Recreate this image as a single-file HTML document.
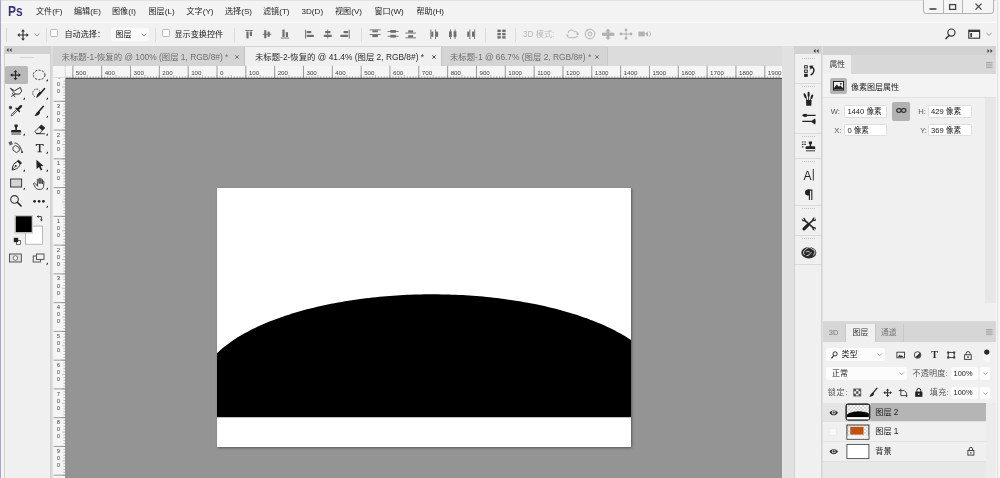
<!DOCTYPE html><html><head><meta charset="utf-8"><title>Photoshop</title><style>
*{margin:0;padding:0;box-sizing:border-box}
html,body{width:1000px;height:478px;overflow:hidden;background:#f0f0f0}
body{position:relative;filter:blur(0.4px);font-family:"Liberation Sans","Noto Sans CJK SC",sans-serif;font-size:8px;color:#222;line-height:1}
.a{position:absolute}
.t{position:absolute;white-space:nowrap;line-height:10px;height:10px}
svg{position:absolute;overflow:visible}
.menu span{position:absolute;top:6.5px;font-size:8.1px;line-height:10px;white-space:nowrap;color:#1e1e1e}
.rl{position:absolute;font-size:6.2px;line-height:7px;color:#444;white-space:nowrap}
.vd{position:absolute;font-size:6px;line-height:7.1px;color:#4a4a4a;width:8px;text-align:center}
.inp{position:absolute;background:#fff;border:0.7px solid #dedede;border-radius:1.5px;font-size:7.6px;line-height:11px;padding-left:2.4px;white-space:nowrap;color:#1c1c1c}
.lab{position:absolute;font-size:7.6px;line-height:10px;color:#555;white-space:nowrap}
</style></head><body>
<div class="a" style="left:0.00px;top:0.00px;width:1000.00px;height:22.30px;background:#f3f3f3;"></div>
<div class="a" style="left:0.00px;top:0.00px;width:1000.00px;height:0.80px;background:#e2e2e2;"></div>
<div class="a" style="left:0.00px;top:22.00px;width:1000.00px;height:1.20px;background:#fbfbfb;"></div>
<div class="a" style="left:0.00px;top:23.20px;width:1000.00px;height:23.00px;background:#f1f1f1;"></div>
<div class="a" style="left:7.6px;top:3.6px;font-size:13.8px;line-height:15px;font-weight:bold;color:#3a3478;transform:scaleX(0.87);transform-origin:0 0">Ps</div>
<div class="menu">
<span style="left:36px">文件(F)</span>
<span style="left:74px">编辑(E)</span>
<span style="left:112px">图像(I)</span>
<span style="left:148.5px">图层(L)</span>
<span style="left:186.5px">文字(Y)</span>
<span style="left:225px">选择(S)</span>
<span style="left:263px">滤镜(T)</span>
<span style="left:301.5px">3D(D)</span>
<span style="left:335px">视图(V)</span>
<span style="left:374.5px">窗口(W)</span>
<span style="left:416.5px">帮助(H)</span>
</div>
<div class="a" style="left:923px;top:-3px;width:70.5px;height:16.6px;border:0.8px solid #b2b2b2;border-radius:3px;background:#f5f5f5"></div>
<div class="a" style="left:943.30px;top:0.00px;width:0.80px;height:12.50px;background:#b5b5b5;"></div>
<div class="a" style="left:961.70px;top:0.00px;width:0.80px;height:12.50px;background:#b5b5b5;"></div>
<svg style="left:923px;top:0" width="71" height="13" viewBox="0 0 71 13"><path d="M6.5 9h7" stroke="#444" stroke-width="1.6" fill="none"/><rect x="26.6" y="4.6" width="6" height="4.8" fill="none" stroke="#444" stroke-width="1.3"/><path d="M52.5 3.6l6 6M58.5 3.6l-6 6" stroke="#444" stroke-width="1.3" fill="none"/></svg>
<div class="a" style="left:5.60px;top:28.00px;width:0.80px;height:14.00px;background:#d4d4d4;"></div>
<svg style="left:17.2px;top:28.6px" width="12" height="12" viewBox="0 0 12 12"><path d="M6 0.3l2 2.3H6.6v2.8h2.8V4l2.3 2-2.3 2V6.6H6.6v2.8H8l-2 2.3-2-2.3h1.4V6.6H2.6V8L0.3 6l2.3-2v1.4h2.8V2.6H4z" fill="#333"/></svg>
<svg style="left:33.5px;top:33px" width="6" height="4" viewBox="0 0 6 4"><path d="M0.5 0.5l2.5 2.5 2.5-2.5" stroke="#8a8a8a" stroke-width="0.9" fill="none"/></svg>
<div class="a" style="left:45.50px;top:28.00px;width:0.80px;height:14.00px;background:#dcdcdc;"></div>
<div class="a" style="left:50.3px;top:29.3px;width:8.2px;height:8.2px;border:0.8px solid #b8b8b8;border-radius:1.5px;background:#fbfbfb"></div>
<div class="t" style="left:64.50px;top:30.40px;font-size:8.1px;color:#222;">自动选择：</div>
<div class="a" style="left:110.5px;top:27.5px;width:38px;height:13.5px;background:#fbfbfb;border-radius:2px"></div>
<div class="t" style="left:115.50px;top:30.40px;font-size:8.1px;color:#222;">图层</div>
<svg style="left:141px;top:33px" width="6" height="4" viewBox="0 0 6 4"><path d="M0.5 0.5l2.5 2.5 2.5-2.5" stroke="#9a9a9a" stroke-width="0.9" fill="none"/></svg>
<div class="a" style="left:154.50px;top:28.00px;width:0.80px;height:14.00px;background:#dcdcdc;"></div>
<div class="a" style="left:161.5px;top:29.3px;width:8.2px;height:8.2px;border:0.8px solid #b8b8b8;border-radius:1.5px;background:#fbfbfb"></div>
<div class="t" style="left:174.50px;top:30.40px;font-size:8.1px;color:#222;">显示变换控件</div>
<div class="a" style="left:233.50px;top:28.00px;width:0.80px;height:14.00px;background:#dcdcdc;"></div>
<div class="a" style="left:361.00px;top:28.00px;width:0.80px;height:14.00px;background:#dcdcdc;"></div>
<div class="a" style="left:485.00px;top:28.00px;width:0.80px;height:14.00px;background:#dcdcdc;"></div>
<div class="a" style="left:515.00px;top:28.00px;width:0.80px;height:14.00px;background:#dcdcdc;"></div>
<div class="t" style="left:523.00px;top:30.40px;font-size:8.2px;color:#bababa;">3D 模式:</div>
<svg style="left:240px;top:24px" width="420" height="22" viewBox="240 24 420 22">
<g fill="#6f6f6f" stroke="none">
<!-- align top -->
<rect x="245.200" y="30" width="7.600" height="0.900"/><rect x="246.400" y="31.600" width="2.200" height="6.800"/><rect x="249.800" y="31.600" width="2.200" height="4.400"/>
<!-- align vcenter -->
<rect x="262.600" y="33.800" width="8.800" height="0.900"/><rect x="264.200" y="30.200" width="2.200" height="8"/><rect x="267.600" y="31.600" width="2.200" height="5.200"/>
<!-- align bottom -->
<rect x="280.800" y="37.600" width="8.400" height="0.900"/><rect x="282.400" y="29.600" width="2.200" height="7.400"/><rect x="285.800" y="32.200" width="2.200" height="4.800"/>
<!-- align left -->
<rect x="305" y="29.600" width="0.900" height="9"/><rect x="306.600" y="31" width="4.600" height="2.200"/><rect x="306.600" y="34.800" width="7.200" height="2.200"/>
<!-- align hcenter -->
<rect x="327.300" y="29.600" width="0.900" height="9"/><rect x="325.200" y="31" width="5.200" height="2.200"/><rect x="323.800" y="34.800" width="8" height="2.200"/>
<!-- align right -->
<rect x="348.800" y="29.600" width="0.900" height="9"/><rect x="343.600" y="31" width="4.600" height="2.200"/><rect x="340.400" y="34.800" width="7.800" height="2.200"/>
<!-- dist top -->
<rect x="369.600" y="29.400" width="11" height="0.900"/><rect x="372.400" y="30.300" width="5.400" height="2"/><rect x="369.600" y="34" width="11" height="0.900"/><rect x="372.400" y="34.900" width="5.400" height="2.200"/>
<!-- dist vcenter -->
<rect x="387.600" y="31" width="11" height="0.900"/><rect x="390.400" y="30" width="5.400" height="2.800"/><rect x="387.600" y="35.800" width="11" height="0.900"/><rect x="390.400" y="34.800" width="5.400" height="2.800"/>
<!-- dist bottom -->
<rect x="405.400" y="32.600" width="10.600" height="0.900"/><rect x="408.200" y="30.400" width="5" height="2.200"/><rect x="405.400" y="37.400" width="10.600" height="0.900"/><rect x="408.200" y="35.200" width="5" height="2.200"/>
<!-- dist left -->
<rect x="430.400" y="29.400" width="0.900" height="9.600"/><rect x="431.300" y="31.600" width="2" height="5.200"/><rect x="435" y="29.400" width="0.900" height="9.600"/><rect x="435.900" y="31.600" width="2.200" height="5.200"/>
<!-- dist hcenter -->
<rect x="450" y="29.400" width="0.900" height="9.600"/><rect x="449" y="31.400" width="2.800" height="5.600"/><rect x="454.600" y="29.400" width="0.900" height="9.600"/><rect x="453.600" y="31.400" width="2.800" height="5.600"/>
<!-- dist right -->
<rect x="469.400" y="29.400" width="0.900" height="9.600"/><rect x="467.200" y="31.600" width="2.200" height="5.200"/><rect x="474.200" y="29.400" width="0.900" height="9.600"/><rect x="472" y="31.600" width="2.200" height="5.200"/>
<!-- auto align grid -->
<rect x="497.400" y="29.600" width="3.400" height="2.400"/><rect x="502.200" y="29.600" width="3.400" height="2.400"/><rect x="497.400" y="32.900" width="3.400" height="2.400"/><rect x="502.200" y="32.900" width="3.400" height="2.400"/><rect x="497.400" y="36.200" width="3.400" height="2.400"/><rect x="502.200" y="36.200" width="3.400" height="2.400"/>
</g>
<g fill="none" stroke="#b2b2b2" stroke-width="1">
<!-- orbit -->
<path d="M568 33.200a3.400 3.400 0 0 1 6.400-1.400 2.800 2.800 0 0 1 3.800 2.800"/>
<path d="M577.800 36.200a6 2.600 0 0 1-10.600 .4"/>
<path d="M566 34.600l1.200 2.200 1.600-1.800zM578.800 33.400l-1.400 2-1.400-1.800z" fill="#b2b2b2" stroke="none"/>
<!-- roll -->
<circle cx="590" cy="34" r="4.800"/><circle cx="590" cy="34" r="2"/>
<path d="M585.600 30l2.200-.8-.2 2.200z" fill="#b2b2b2" stroke="none"/>
</g>
<g fill="#b2b2b2">
<!-- pan -->
<path d="M608 28.600l2.800 2.800h-1.600v1.400h3.600v1.600l0 0h0v-1.600h0l0 0v1.600h0 0v1.400h-3.600v1.400h1.600l-2.800 2.800-2.800-2.800h1.600v-1.400h-3.600v-3h3.600v-1.400h-1.600z"/>
<path d="M602 32.800h12.400v3h-12.400z"/>
<!-- slide -->
<circle cx="626" cy="29.800" r="1.400"/><circle cx="626" cy="38.400" r="1.400"/><circle cx="621" cy="34" r="1.400"/><circle cx="631" cy="34" r="1.400"/><circle cx="626" cy="34" r="1"/>
<path d="M621 33.600h10v.9h-10zM625.600 30h.9v8h-.9z"/>
<!-- camera -->
<rect x="638.400" y="31.600" width="6.400" height="4.800"/><path d="M645.600 33.200l2.400-1.600v4.800l-2.400-1.600z"/>
<path d="M649.400 31.400l1.400 2.600-1.400 2.600" fill="none" stroke="#b2b2b2" stroke-width="0.800"/>
</g>
<!-- search -->
</svg>
<svg style="left:940px;top:26px" width="56" height="18" viewBox="940 26 56 18">
<circle cx="951.400" cy="32.600" r="3.600" fill="none" stroke="#333" stroke-width="1.200"/>
<path d="M949 35.400l-3 3.200" stroke="#333" stroke-width="1.500" stroke-linecap="round"/>
<rect x="968.800" y="30.200" width="10.800" height="8" fill="#f4f4f4" stroke="#333" stroke-width="1.100"/>
<rect x="968.800" y="30.200" width="10.800" height="1.800" fill="#333"/>
<rect x="970.400" y="33" width="1.600" height="4" fill="#333"/>
<path d="M986.400 33l2.600 2.400 2.600-2.400" fill="none" stroke="#8a8a8a" stroke-width="0.900"/>
</svg>

<div class="a" style="left:0.00px;top:46.20px;width:1000.00px;height:432.00px;background:#dadada;"></div>
<div class="a" style="left:53.30px;top:46.20px;width:729.10px;height:19.50px;background:#d4d4d4;"></div>
<div class="a" style="left:607.00px;top:46.20px;width:175.40px;height:19.50px;background:#dcdcdc;"></div>
<div class="a" style="left:606.60px;top:47.00px;width:0.80px;height:18.50px;background:#c8c8c8;"></div>
<div class="a" style="left:245.00px;top:46.60px;width:196.00px;height:19.40px;background:#f0f0f0;"></div>
<div class="a" style="left:244.40px;top:47.00px;width:0.80px;height:18.50px;background:#c4c4c4;"></div>
<div class="a" style="left:441.00px;top:47.00px;width:0.80px;height:18.50px;background:#c4c4c4;"></div>
<div class="t" style="left:61.60px;top:51.60px;font-size:8.4px;color:#6e6e6e;">未标题-1-恢复的 @ 100% (图层 1, RGB/8#) *</div>
<div class="t" style="left:255.00px;top:51.60px;font-size:8.4px;color:#2a2a2a;">未标题-2-恢复的 @ 41.4% (图层 2, RGB/8#) *</div>
<div class="t" style="left:450.00px;top:51.60px;font-size:8.4px;color:#6e6e6e;">未标题-1 @ 66.7% (图层 2, RGB/8#) *</div>
<svg style="left:234.8px;top:54.6px" width="4" height="4" viewBox="0 0 4 4"><path d="M0.3 0.3l3.4 3.4M3.7 0.3l-3.4 3.4" stroke="#666" stroke-width="0.9"/></svg>
<svg style="left:431.6px;top:54.6px" width="4" height="4" viewBox="0 0 4 4"><path d="M0.3 0.3l3.4 3.4M3.7 0.3l-3.4 3.4" stroke="#333" stroke-width="0.9"/></svg>
<svg style="left:595px;top:54.6px" width="4" height="4" viewBox="0 0 4 4"><path d="M0.3 0.3l3.4 3.4M3.7 0.3l-3.4 3.4" stroke="#666" stroke-width="0.9"/></svg>
<div class="a" style="left:53.30px;top:65.60px;width:729.10px;height:12.80px;background:#f5f5f5;"></div>
<div class="a" style="left:53.30px;top:78.00px;width:12.30px;height:400.00px;background:#f5f5f5;"></div>
<div class="a" style="left:53.30px;top:65.60px;width:12.30px;height:12.40px;background:#f5f5f5;"></div>
<div class="a" style="left:65.60px;top:78.40px;width:716.80px;height:400.00px;background:#949494;"></div>
<svg style="left:0;top:0" width="1000" height="478" viewBox="0 0 1000 478"><path d="M67.08 76.20V78.4M69.97 76.20V78.4M72.85 75.00V78.4M75.73 76.20V78.4M78.62 76.20V78.4M81.50 76.20V78.4M84.38 76.20V78.4M87.26 75.00V78.4M90.15 76.20V78.4M93.03 76.20V78.4M95.91 76.20V78.4M98.80 76.20V78.4M101.68 75.00V78.4M104.56 76.20V78.4M107.45 76.20V78.4M110.33 76.20V78.4M113.21 76.20V78.4M116.09 75.00V78.4M118.98 76.20V78.4M121.86 76.20V78.4M124.74 76.20V78.4M127.63 76.20V78.4M130.51 75.00V78.4M133.39 76.20V78.4M136.28 76.20V78.4M139.16 76.20V78.4M142.04 76.20V78.4M144.93 75.00V78.4M147.81 76.20V78.4M150.69 76.20V78.4M153.57 76.20V78.4M156.46 76.20V78.4M159.34 75.00V78.4M162.22 76.20V78.4M165.11 76.20V78.4M167.99 76.20V78.4M170.87 76.20V78.4M173.75 75.00V78.4M176.64 76.20V78.4M179.52 76.20V78.4M182.40 76.20V78.4M185.29 76.20V78.4M188.17 75.00V78.4M191.05 76.20V78.4M193.94 76.20V78.4M196.82 76.20V78.4M199.70 76.20V78.4M202.59 75.00V78.4M205.47 76.20V78.4M208.35 76.20V78.4M211.23 76.20V78.4M214.12 76.20V78.4M217.00 75.00V78.4M219.88 76.20V78.4M222.77 76.20V78.4M225.65 76.20V78.4M228.53 76.20V78.4M231.41 75.00V78.4M234.30 76.20V78.4M237.18 76.20V78.4M240.06 76.20V78.4M242.95 76.20V78.4M245.83 75.00V78.4M248.71 76.20V78.4M251.60 76.20V78.4M254.48 76.20V78.4M257.36 76.20V78.4M260.25 75.00V78.4M263.13 76.20V78.4M266.01 76.20V78.4M268.89 76.20V78.4M271.78 76.20V78.4M274.66 75.00V78.4M277.54 76.20V78.4M280.43 76.20V78.4M283.31 76.20V78.4M286.19 76.20V78.4M289.07 75.00V78.4M291.96 76.20V78.4M294.84 76.20V78.4M297.72 76.20V78.4M300.61 76.20V78.4M303.49 75.00V78.4M306.37 76.20V78.4M309.26 76.20V78.4M312.14 76.20V78.4M315.02 76.20V78.4M317.90 75.00V78.4M320.79 76.20V78.4M323.67 76.20V78.4M326.55 76.20V78.4M329.44 76.20V78.4M332.32 75.00V78.4M335.20 76.20V78.4M338.09 76.20V78.4M340.97 76.20V78.4M343.85 76.20V78.4M346.74 75.00V78.4M349.62 76.20V78.4M352.50 76.20V78.4M355.38 76.20V78.4M358.27 76.20V78.4M361.15 75.00V78.4M364.03 76.20V78.4M366.92 76.20V78.4M369.80 76.20V78.4M372.68 76.20V78.4M375.56 75.00V78.4M378.45 76.20V78.4M381.33 76.20V78.4M384.21 76.20V78.4M387.10 76.20V78.4M389.98 75.00V78.4M392.86 76.20V78.4M395.75 76.20V78.4M398.63 76.20V78.4M401.51 76.20V78.4M404.39 75.00V78.4M407.28 76.20V78.4M410.16 76.20V78.4M413.04 76.20V78.4M415.93 76.20V78.4M418.81 75.00V78.4M421.69 76.20V78.4M424.58 76.20V78.4M427.46 76.20V78.4M430.34 76.20V78.4M433.23 75.00V78.4M436.11 76.20V78.4M438.99 76.20V78.4M441.87 76.20V78.4M444.76 76.20V78.4M447.64 75.00V78.4M450.52 76.20V78.4M453.41 76.20V78.4M456.29 76.20V78.4M459.17 76.20V78.4M462.06 75.00V78.4M464.94 76.20V78.4M467.82 76.20V78.4M470.70 76.20V78.4M473.59 76.20V78.4M476.47 75.00V78.4M479.35 76.20V78.4M482.24 76.20V78.4M485.12 76.20V78.4M488.00 76.20V78.4M490.88 75.00V78.4M493.77 76.20V78.4M496.65 76.20V78.4M499.53 76.20V78.4M502.42 76.20V78.4M505.30 75.00V78.4M508.18 76.20V78.4M511.07 76.20V78.4M513.95 76.20V78.4M516.83 76.20V78.4M519.71 75.00V78.4M522.60 76.20V78.4M525.48 76.20V78.4M528.36 76.20V78.4M531.25 76.20V78.4M534.13 75.00V78.4M537.01 76.20V78.4M539.90 76.20V78.4M542.78 76.20V78.4M545.66 76.20V78.4M548.55 75.00V78.4M551.43 76.20V78.4M554.31 76.20V78.4M557.19 76.20V78.4M560.08 76.20V78.4M562.96 75.00V78.4M565.84 76.20V78.4M568.73 76.20V78.4M571.61 76.20V78.4M574.49 76.20V78.4M577.38 75.00V78.4M580.26 76.20V78.4M583.14 76.20V78.4M586.02 76.20V78.4M588.91 76.20V78.4M591.79 75.00V78.4M594.67 76.20V78.4M597.56 76.20V78.4M600.44 76.20V78.4M603.32 76.20V78.4M606.20 75.00V78.4M609.09 76.20V78.4M611.97 76.20V78.4M614.85 76.20V78.4M617.74 76.20V78.4M620.62 75.00V78.4M623.50 76.20V78.4M626.39 76.20V78.4M629.27 76.20V78.4M632.15 76.20V78.4M635.04 75.00V78.4M637.92 76.20V78.4M640.80 76.20V78.4M643.68 76.20V78.4M646.57 76.20V78.4M649.45 75.00V78.4M652.33 76.20V78.4M655.22 76.20V78.4M658.10 76.20V78.4M660.98 76.20V78.4M663.87 75.00V78.4M666.75 76.20V78.4M669.63 76.20V78.4M672.51 76.20V78.4M675.40 76.20V78.4M678.28 75.00V78.4M681.16 76.20V78.4M684.05 76.20V78.4M686.93 76.20V78.4M689.81 76.20V78.4M692.69 75.00V78.4M695.58 76.20V78.4M698.46 76.20V78.4M701.34 76.20V78.4M704.23 76.20V78.4M707.11 75.00V78.4M709.99 76.20V78.4M712.88 76.20V78.4M715.76 76.20V78.4M718.64 76.20V78.4M721.52 75.00V78.4M724.41 76.20V78.4M727.29 76.20V78.4M730.17 76.20V78.4M733.06 76.20V78.4M735.94 75.00V78.4M738.82 76.20V78.4M741.71 76.20V78.4M744.59 76.20V78.4M747.47 76.20V78.4M750.36 75.00V78.4M753.24 76.20V78.4M756.12 76.20V78.4M759.00 76.20V78.4M761.89 76.20V78.4M764.77 75.00V78.4M767.65 76.20V78.4M770.54 76.20V78.4M773.42 76.20V78.4M776.30 76.20V78.4M779.18 75.00V78.4" stroke="#777" stroke-width="0.5" fill="none"/><path d="M72.85 65.8V78.4M101.68 65.8V78.4M130.51 65.8V78.4M159.34 65.8V78.4M188.17 65.8V78.4M217.00 65.8V78.4M245.83 65.8V78.4M274.66 65.8V78.4M303.49 65.8V78.4M332.32 65.8V78.4M361.15 65.8V78.4M389.98 65.8V78.4M418.81 65.8V78.4M447.64 65.8V78.4M476.47 65.8V78.4M505.30 65.8V78.4M534.13 65.8V78.4M562.96 65.8V78.4M591.79 65.8V78.4M620.62 65.8V78.4M649.45 65.8V78.4M678.28 65.8V78.4M707.11 65.8V78.4M735.94 65.8V78.4M764.77 65.8V78.4" stroke="#858585" stroke-width="0.8" fill="none"/><path d="M63.40 81.19H65.6M63.40 84.06H65.6M62.20 86.94H65.6M63.40 89.82H65.6M63.40 92.69H65.6M63.40 95.57H65.6M63.40 98.44H65.6M62.20 101.32H65.6M63.40 104.20H65.6M63.40 107.07H65.6M63.40 109.95H65.6M63.40 112.82H65.6M62.20 115.70H65.6M63.40 118.58H65.6M63.40 121.45H65.6M63.40 124.33H65.6M63.40 127.20H65.6M62.20 130.08H65.6M63.40 132.96H65.6M63.40 135.83H65.6M63.40 138.71H65.6M63.40 141.58H65.6M62.20 144.46H65.6M63.40 147.34H65.6M63.40 150.21H65.6M63.40 153.09H65.6M63.40 155.96H65.6M62.20 158.84H65.6M63.40 161.72H65.6M63.40 164.59H65.6M63.40 167.47H65.6M63.40 170.34H65.6M62.20 173.22H65.6M63.40 176.10H65.6M63.40 178.97H65.6M63.40 181.85H65.6M63.40 184.72H65.6M62.20 187.60H65.6M63.40 190.48H65.6M63.40 193.35H65.6M63.40 196.23H65.6M63.40 199.10H65.6M62.20 201.98H65.6M63.40 204.86H65.6M63.40 207.73H65.6M63.40 210.61H65.6M63.40 213.48H65.6M62.20 216.36H65.6M63.40 219.24H65.6M63.40 222.11H65.6M63.40 224.99H65.6M63.40 227.86H65.6M62.20 230.74H65.6M63.40 233.62H65.6M63.40 236.49H65.6M63.40 239.37H65.6M63.40 242.24H65.6M62.20 245.12H65.6M63.40 248.00H65.6M63.40 250.87H65.6M63.40 253.75H65.6M63.40 256.62H65.6M62.20 259.50H65.6M63.40 262.38H65.6M63.40 265.25H65.6M63.40 268.13H65.6M63.40 271.00H65.6M62.20 273.88H65.6M63.40 276.76H65.6M63.40 279.63H65.6M63.40 282.51H65.6M63.40 285.38H65.6M62.20 288.26H65.6M63.40 291.14H65.6M63.40 294.01H65.6M63.40 296.89H65.6M63.40 299.76H65.6M62.20 302.64H65.6M63.40 305.52H65.6M63.40 308.39H65.6M63.40 311.27H65.6M63.40 314.14H65.6M62.20 317.02H65.6M63.40 319.90H65.6M63.40 322.77H65.6M63.40 325.65H65.6M63.40 328.52H65.6M62.20 331.40H65.6M63.40 334.28H65.6M63.40 337.15H65.6M63.40 340.03H65.6M63.40 342.90H65.6M62.20 345.78H65.6M63.40 348.66H65.6M63.40 351.53H65.6M63.40 354.41H65.6M63.40 357.28H65.6M62.20 360.16H65.6M63.40 363.04H65.6M63.40 365.91H65.6M63.40 368.79H65.6M63.40 371.66H65.6M62.20 374.54H65.6M63.40 377.42H65.6M63.40 380.29H65.6M63.40 383.17H65.6M63.40 386.04H65.6M62.20 388.92H65.6M63.40 391.80H65.6M63.40 394.67H65.6M63.40 397.55H65.6M63.40 400.42H65.6M62.20 403.30H65.6M63.40 406.18H65.6M63.40 409.05H65.6M63.40 411.93H65.6M63.40 414.80H65.6M62.20 417.68H65.6M63.40 420.56H65.6M63.40 423.43H65.6M63.40 426.31H65.6M63.40 429.18H65.6M62.20 432.06H65.6M63.40 434.94H65.6M63.40 437.81H65.6M63.40 440.69H65.6M63.40 443.56H65.6M62.20 446.44H65.6M63.40 449.32H65.6M63.40 452.19H65.6M63.40 455.07H65.6M63.40 457.94H65.6M62.20 460.82H65.6M63.40 463.70H65.6M63.40 466.57H65.6M63.40 469.45H65.6M63.40 472.32H65.6M62.20 475.20H65.6" stroke="#777" stroke-width="0.5" fill="none"/><path d="M53.6 101.32H65.6M53.6 130.08H65.6M53.6 158.84H65.6M53.6 187.60H65.6M53.6 216.36H65.6M53.6 245.12H65.6M53.6 273.88H65.6M53.6 302.64H65.6M53.6 331.40H65.6M53.6 360.16H65.6M53.6 388.92H65.6M53.6 417.68H65.6M53.6 446.44H65.6M53.6 475.20H65.6" stroke="#858585" stroke-width="0.8" fill="none"/><path d="M65.6 78.3H782.4" stroke="#3c3c3c" stroke-width="1"/><path d="M65.6 78.4V478" stroke="#6a6a6a" stroke-width="0.7"/><path d="M53.6 77.6H65.6M65.2 65.8V78" stroke="#999" stroke-width="0.6" stroke-dasharray="1 1"/></svg>
<div class="rl" style="left:75.85px;top:68.9px">500</div>
<div class="rl" style="left:104.68px;top:68.9px">400</div>
<div class="rl" style="left:133.51px;top:68.9px">300</div>
<div class="rl" style="left:162.34px;top:68.9px">200</div>
<div class="rl" style="left:191.17px;top:68.9px">100</div>
<div class="rl" style="left:220.00px;top:68.9px">0</div>
<div class="rl" style="left:248.83px;top:68.9px">100</div>
<div class="rl" style="left:277.66px;top:68.9px">200</div>
<div class="rl" style="left:306.49px;top:68.9px">300</div>
<div class="rl" style="left:335.32px;top:68.9px">400</div>
<div class="rl" style="left:364.15px;top:68.9px">500</div>
<div class="rl" style="left:392.98px;top:68.9px">600</div>
<div class="rl" style="left:421.81px;top:68.9px">700</div>
<div class="rl" style="left:450.64px;top:68.9px">800</div>
<div class="rl" style="left:479.47px;top:68.9px">900</div>
<div class="rl" style="left:508.30px;top:68.9px">1000</div>
<div class="rl" style="left:537.13px;top:68.9px">1100</div>
<div class="rl" style="left:565.96px;top:68.9px">1200</div>
<div class="rl" style="left:594.79px;top:68.9px">1300</div>
<div class="rl" style="left:623.62px;top:68.9px">1400</div>
<div class="rl" style="left:652.45px;top:68.9px">1500</div>
<div class="rl" style="left:681.28px;top:68.9px">1600</div>
<div class="rl" style="left:710.11px;top:68.9px">1700</div>
<div class="rl" style="left:738.94px;top:68.9px">1800</div>
<div class="rl" style="left:767.77px;top:68.9px">1900</div>
<div class="a" style="left:53.3px;top:78.4px;width:12.3px;height:400px;overflow:hidden">
<div class="vd" style="left:1.2px;top:-4.24px">4<br>0<br>0</div>
<div class="vd" style="left:1.2px;top:24.52px">3<br>0<br>0</div>
<div class="vd" style="left:1.2px;top:53.28px">2<br>0<br>0</div>
<div class="vd" style="left:1.2px;top:82.04px">1<br>0<br>0</div>
<div class="vd" style="left:1.2px;top:110.80px">0</div>
<div class="vd" style="left:1.2px;top:139.56px">1<br>0<br>0</div>
<div class="vd" style="left:1.2px;top:168.32px">2<br>0<br>0</div>
<div class="vd" style="left:1.2px;top:197.08px">3<br>0<br>0</div>
<div class="vd" style="left:1.2px;top:225.84px">4<br>0<br>0</div>
<div class="vd" style="left:1.2px;top:254.60px">5<br>0<br>0</div>
<div class="vd" style="left:1.2px;top:283.36px">6<br>0<br>0</div>
<div class="vd" style="left:1.2px;top:312.12px">7<br>0<br>0</div>
<div class="vd" style="left:1.2px;top:340.88px">8<br>0<br>0</div>
<div class="vd" style="left:1.2px;top:369.64px">9<br>0<br>0</div>
<div class="vd" style="left:1.2px;top:398.40px">1<br>0<br>0<br>0</div>
</div>
<div class="a" style="left:216.60px;top:187.60px;width:414.70px;height:259.40px;background:#fff;box-shadow:1px 1px 2.5px rgba(0,0,0,0.4);overflow:hidden">
<svg style="left:0;top:0" width="414.70" height="259.40"><path d="M0.00 165.28L3.46 162.06L6.91 159.12L10.37 156.41L13.82 153.89L17.28 151.54L20.73 149.33L24.19 147.24L27.65 145.27L31.10 143.40L34.56 141.61L38.01 139.91L41.47 138.29L44.93 136.73L48.38 135.24L51.84 133.82L55.29 132.45L58.75 131.14L62.21 129.88L65.66 128.66L69.12 127.50L72.57 126.38L76.03 125.30L79.48 124.26L82.94 123.26L86.40 122.30L89.85 121.37L93.31 120.48L96.76 119.63L100.22 118.80L103.67 118.01L107.13 117.25L110.59 116.52L114.04 115.82L117.50 115.15L120.95 114.51L124.41 113.89L127.87 113.30L131.32 112.74L134.78 112.20L138.23 111.69L141.69 111.21L145.15 110.75L148.60 110.31L152.06 109.90L155.51 109.51L158.97 109.14L162.42 108.80L165.88 108.48L169.34 108.18L172.79 107.91L176.25 107.66L179.70 107.43L183.16 107.22L186.61 107.03L190.07 106.86L193.53 106.72L196.98 106.60L200.44 106.50L203.89 106.41L207.35 106.36L210.81 106.32L214.26 106.30L217.72 106.31L221.17 106.33L224.63 106.38L228.09 106.44L231.54 106.53L235.00 106.64L238.45 106.77L241.91 106.93L245.36 107.10L248.82 107.30L252.28 107.51L255.73 107.75L259.19 108.02L262.64 108.30L266.10 108.61L269.55 108.93L273.01 109.29L276.47 109.66L279.92 110.06L283.38 110.48L286.83 110.93L290.29 111.40L293.75 111.89L297.20 112.42L300.66 112.96L304.11 113.53L307.57 114.13L311.02 114.76L314.48 115.41L317.94 116.10L321.39 116.81L324.85 117.55L328.30 118.32L331.76 119.13L335.22 119.96L338.67 120.83L342.13 121.74L345.58 122.68L349.04 123.65L352.50 124.67L355.95 125.72L359.41 126.82L362.86 127.96L366.32 129.14L369.77 130.37L373.23 131.66L376.69 132.99L380.14 134.38L383.60 135.83L387.05 137.34L390.51 138.93L393.96 140.58L397.42 142.31L400.88 144.13L404.33 146.05L407.79 148.06L411.24 150.20L414.70 152.46L414.70 229.30L0 229.30Z" fill="#000"/></svg>
</div>
<div class="a" style="left:3.60px;top:46.20px;width:47.20px;height:432.00px;background:#f0f0f0;border-left:0.7px solid #d0d0d0;border-right:0.7px solid #cfcfcf"></div>
<div class="a" style="left:3.60px;top:46.20px;width:47.20px;height:7.60px;background:#d2d2d2;"></div>
<div class="a" style="left:50.80px;top:46.20px;width:2.50px;height:432.00px;background:#dcdcdc;"></div>
<div class="a" style="left:0.00px;top:46.20px;width:3.60px;height:432.00px;background:#f2f2f2;"></div>
<div class="a" style="left:0.00px;top:0.00px;width:0.90px;height:478.00px;background:#a6a6bc;"></div>
<svg style="left:6.2px;top:48.2px" width="6" height="4" viewBox="0 0 6 4"><path d="M2.6 0L0.4 2l2.2 2zM5.6 0L3.4 2l2.2 2z" fill="#444"/></svg>
<div class="a" style="left:20.00px;top:57.40px;width:14.00px;height:0.90px;background:#d6d6d6;"></div>
<div class="a" style="left:5.00px;top:65.80px;width:22.60px;height:18.20px;background:#b9b9b9;border-radius:1.5px"></div>
<svg style="left:0;top:46px" width="53" height="432" viewBox="0 46 53 432">
<g fill="#2b2b2b" stroke="none">
<!-- corner triangles -->
<path d="M48 79v2.2h-2.2zM25 97.2v2.2h-2.2zM48 97.2v2.2h-2.2zM48 115.4v2.2h-2.2zM25 133.2v2.2h-2.2zM48 133.2v2.2h-2.2zM48 151.2v2.2h-2.2zM25 169.2v2.2h-2.2zM48 169.2v2.2h-2.2zM25 187.4v2.2h-2.2zM48 187.4v2.2h-2.2zM48 205.4v2.2h-2.2zM48 262.4v2.2h-2.2z"/>
<!-- move tool -->
<path d="M15.5 69.9l2 2.4h-1.4v2.2h2.4v-1.4l2.4 2-2.4 2v-1.4h-2.4v2.2h1.4l-2 2.4-2-2.4h1.4v-2.2h-2.4v1.4l-2.4-2 2.4-2v1.4h2.4v-2.2h-1.400z"/>
</g>
<!-- elliptical marquee -->
<ellipse cx="39.1" cy="74.9" rx="5.9" ry="4.7" fill="none" stroke="#333" stroke-width="1" stroke-dasharray="2.1 1.3"/>
<!-- polygonal/magnetic lasso -->
<path d="M10.300 88.200l4.200 2.600 5.800-3.400 1.400 3.800-2.200 2.800-4.200 .2z" fill="none" stroke="#333" stroke-width="1" stroke-linejoin="round"/>
<path d="M15.300 94l-4.300 2.600M12.200 93l2.800 4.200" fill="none" stroke="#333" stroke-width="0.900"/>
<!-- quick selection -->
<path d="M37.600 97a4 4 0 1 1 2.200-6.400" fill="none" stroke="#333" stroke-width="0.9" stroke-dasharray="1.6 1"/>
<path d="M44.600 88.600l-4.200 4.800" stroke="#222" stroke-width="1.500" stroke-linecap="round"/>
<path d="M41 92.800l-2.600 3-1 .6 .2-1.200 2.400-3z" fill="#222" stroke="#222" stroke-width="1.200" stroke-linejoin="round"/>
<!-- color sampler eyedropper -->
<path d="M8.800 107.600h3.400M10.500 105.900v3.400" stroke="#444" stroke-width="1"/>
<rect x="9.3" y="106.400" width="2.400" height="2.400" fill="none" stroke="#444" stroke-width="0.600"/>
<path d="M21 106.200l-3.200 3.200" stroke="#222" stroke-width="2.400" stroke-linecap="round"/>
<path d="M16 108.200l3.400 3.400" stroke="#222" stroke-width="1.400" stroke-linecap="round"/>
<path d="M17 110.800l-4.600 4.800-1.200 .2 .2-1.200 4.600-4.800" fill="#f0f0f0" stroke="#333" stroke-width="0.900" stroke-linejoin="round"/>
<!-- brush -->
<path d="M43.400 106.200l-4.800 5.600" stroke="#222" stroke-width="1.500" stroke-linecap="round"/>
<path d="M39 111.200c-1 .2-2.600 1.200-3.200 2.600-.4 1-.8 1.600-1.600 2 1.800 .4 3.600 0 4.800-1.200 1-1 1.200-2.200 .8-3z" fill="#222"/>
<!-- stamp -->
<path d="M14.500 124.500h3.200v2.200l-.8 .800v2.400h3.400l.8 .800v1.700h-10v-1.700l.8-.800h3.400v-2.400l-.8-.800z" fill="#222"/>
<path d="M11.300 134h9.600" stroke="#222" stroke-width="0.900"/>
<!-- eraser -->
<path d="M41.400 125l3.400 3-5.400 5.400h-2.800l-1.800-1.700z" fill="#f0f0f0" stroke="#222" stroke-width="0.900" stroke-linejoin="round"/>
<path d="M41.400 125l3.400 3-2.600 2.600-3.400-3z" fill="#222"/>
<path d="M36 133.700h8.800" stroke="#222" stroke-width="0.900"/>
<!-- 3D material drop / paint bucket -->
<path d="M8.400 142.200l3.200-1.200 1.300 3.200-3.200 1.300z" fill="#666"/>
<path d="M14.400 143.200c1.600-.6 3.200 .4 4.600 2.200 1.200 1.600 2.200 3.400 2.600 5.200" fill="none" stroke="#333" stroke-width="1"/>
<path d="M15.600 145.400l3.400 2.200 .6 3-3.200 2-3.600-2.600 .4-3z" fill="#f0f0f0" stroke="#333" stroke-width="0.900" stroke-linejoin="round"/>
<path d="M22 150.200c.6 1 .9 1.500 .9 2a.9 .9 0 0 1-1.800 0c0-.5 .3-1 .9-2z" fill="#222"/>
<!-- T -->
<text x="39.700" y="151.600" text-anchor="middle" font-family="Liberation Serif,serif" font-size="12.800" fill="#222" stroke="#222" stroke-width="0.250">T</text>
<!-- pen -->
<path d="M18.400 160.200l3 2.600-1.600 1.800c-.6 2.600-3 4.800-7.600 5.400 .2-4.400 2-7.200 4.600-8z" fill="#f0f0f0" stroke="#222" stroke-width="1" stroke-linejoin="round"/>
<path d="M18.200 160l3.400 3-1.200 1.400-3.400-3z" fill="#222"/>
<circle cx="15.800" cy="166" r="0.900" fill="#222"/>
<path d="M12.400 169.800l3-3.400" stroke="#222" stroke-width="0.600"/>
<!-- path selection arrow -->
<path d="M36.400 159.800l7.200 6.200-3 .2 1.800 3.600-1.600 .8-1.800-3.600-2.400 2z" fill="#222"/>
<!-- rectangle tool -->
<rect x="10.600" y="179" width="11" height="8" fill="#d4d4d4" stroke="#3a3a3a" stroke-width="1"/>
<!-- hand -->
<path d="M35.400 183.600c-1-1-2.200-.6-1.800 .6l2 3.600c.8 1.200 1.800 1.600 3.200 1.600h1.600c1.800 0 3-1.200 3.200-3l.4-4.600c0-.9-1.300-.9-1.400 0l-.2 2.200 .1-4.200c0-1-1.400-1-1.500 0l-.1 3.800-.1-4.800c0-1-1.500-1-1.500 0l-.1 4.800-.4-4c-.1-1-1.500-.9-1.500 .1l.3 6.600z" fill="#f0f0f0" stroke="#333" stroke-width="0.900" stroke-linejoin="round"/>
<!-- zoom -->
<circle cx="14.500" cy="199.400" r="3.800" fill="none" stroke="#333" stroke-width="1.100"/>
<path d="M17.300 202.200l3.800 3.800" stroke="#222" stroke-width="1.600" stroke-linecap="round"/>
<!-- dots -->
<circle cx="34.600" cy="201.300" r="1.350" fill="#222"/><circle cx="39.100" cy="201.300" r="1.350" fill="#222"/><circle cx="43.400" cy="201.300" r="1.350" fill="#222"/>
<!-- swatches -->
<rect x="25.400" y="226.100" width="17.100" height="18.100" fill="#fff" stroke="#a8a8a8" stroke-width="0.800"/>
<rect x="14.800" y="215.300" width="17.900" height="17.800" fill="#d8d8d8" stroke="#bdbdbd" stroke-width="0.600"/>
<rect x="15.800" y="216.300" width="15.900" height="15.800" fill="#000"/>
<!-- swap -->
<path d="M38 216.600h3.400v3.400" fill="none" stroke="#333" stroke-width="0.900"/>
<path d="M38.600 215.200v2.800l-1.900-1.400zM40 219.600h2.800l-1.400 1.900z" fill="#333"/>
<!-- default colors -->
<rect x="16.400" y="240.400" width="4.200" height="4.200" fill="#fff" stroke="#333" stroke-width="0.700"/>
<rect x="13.800" y="237.800" width="4.400" height="4.400" fill="#222"/>
<!-- quick mask -->
<rect x="9.500" y="254" width="11.800" height="8" fill="#e4e4e4" stroke="#444" stroke-width="0.900"/>
<circle cx="15.400" cy="258" r="2.300" fill="#f4f4f4" stroke="#555" stroke-width="0.800"/>
<!-- screen mode -->
<rect x="33.200" y="256" width="7.200" height="6" fill="#f0f0f0" stroke="#444" stroke-width="0.900"/>
<rect x="36.400" y="254" width="7.600" height="5.400" fill="#f0f0f0" stroke="#444" stroke-width="0.900"/>
</svg>

<div class="a" style="left:782.40px;top:46.20px;width:12.00px;height:432.00px;background:#e1e1e1;"></div>
<div class="a" style="left:794.40px;top:46.20px;width:27.40px;height:432.00px;background:#f0f0f0;border-left:0.7px solid #d2d2d2;border-right:0.7px solid #d2d2d2"></div>
<div class="a" style="left:794.40px;top:46.20px;width:27.40px;height:8.00px;background:#d2d2d2;"></div>
<div class="a" style="left:821.80px;top:46.20px;width:1.60px;height:432.00px;background:#e1e1e1;"></div>
<svg style="left:812.5px;top:48.5px" width="6" height="4" viewBox="0 0 6 4"><path d="M2.6 0L0.4 2l2.2 2zM5.6 0L3.4 2l2.2 2z" fill="#444"/></svg>
<div class="a" style="left:795.10px;top:83.00px;width:26.00px;height:0.80px;background:#dadada;"></div>
<div class="a" style="left:795.10px;top:132.50px;width:26.00px;height:0.80px;background:#dadada;"></div>
<div class="a" style="left:795.10px;top:158.40px;width:26.00px;height:0.80px;background:#dadada;"></div>
<div class="a" style="left:795.10px;top:205.40px;width:26.00px;height:0.80px;background:#dadada;"></div>
<div class="a" style="left:795.10px;top:234.60px;width:26.00px;height:0.80px;background:#dadada;"></div>
<div class="a" style="left:795.10px;top:264.00px;width:26.00px;height:0.80px;background:#dadada;"></div>
<div class="a" style="left:802px;top:58px;width:13px;height:0;border-top:0.9px dotted #c2c2c2"></div>
<div class="a" style="left:802px;top:86px;width:13px;height:0;border-top:0.9px dotted #c2c2c2"></div>
<div class="a" style="left:802px;top:135.5px;width:13px;height:0;border-top:0.9px dotted #c2c2c2"></div>
<div class="a" style="left:802px;top:161.4px;width:13px;height:0;border-top:0.9px dotted #c2c2c2"></div>
<div class="a" style="left:802px;top:208.4px;width:13px;height:0;border-top:0.9px dotted #c2c2c2"></div>
<div class="a" style="left:802px;top:237.6px;width:13px;height:0;border-top:0.9px dotted #c2c2c2"></div>
<svg style="left:794px;top:46px" width="28" height="432" viewBox="794 46 28 432">
<!-- history -->
<rect x="804.600" y="65.700" width="2.700" height="2.300" fill="#f0f0f0" stroke="#222" stroke-width="0.900"/>
<rect x="804.600" y="70.100" width="2.700" height="2.300" fill="#f0f0f0" stroke="#222" stroke-width="0.900"/>
<rect x="804.150" y="73.800" width="3.600" height="3.100" fill="#222"/>
<path d="M810.600 75c3.600-1.400 4.600-6 1.400-8" fill="none" stroke="#222" stroke-width="1.400"/>
<path d="M809.300 65.700l4.200-.2-2.800 4.200z" fill="#222"/>
<!-- brush cup -->
<path d="M806 100.100h5.600l-.3 5.600h-5z" fill="#222"/>
<path d="M804.600 94.600l2.400 5.600M808.600 93v7M812.200 95.600l-1.800 4.600" stroke="#222" stroke-width="0.900" fill="none"/>
<path d="M804.500 94.300l1.100 2.800M808.600 92.800v3M812.300 95.500l-.9 2.400" stroke="#222" stroke-width="2" stroke-linecap="round" fill="none"/>
<!-- brush settings sliders -->
<path d="M802.300 115.400h13.300M802.300 121.400h9" stroke="#222" stroke-width="1.100"/>
<path d="M803.400 113.900h3.400v3h-3.400z" fill="#222"/>
<path d="M810.600 121.400l4.400-3c.9 1.800 .9 4.200 0 6z" fill="#222"/>
<!-- clone source --><g transform="translate(0.300 1)">
<path d="M808.500 140.500h3.200v2l-.8 .800v2h3.200l.8 .800v1.900h-9.600v-1.900l.8-.800h3.200v-2l-.8-.800z" fill="#222"/>
<path d="M805.600 149.800h9.200" stroke="#222" stroke-width="0.900"/>
<path d="M801.600 141h1.600M804 141h1.600M801.600 143.400h1.600M804 143.400h1.600M801.600 145.800h1.600" stroke="#333" stroke-width="1.200"/>
</g>
<!-- A| -->
<text x="803.500" y="179.800" font-family="Liberation Sans,sans-serif" font-size="12" fill="#222">A</text>
<path d="M813.300 169v11.500" stroke="#222" stroke-width="0.900"/>
<!-- pilcrow -->
<path d="M807.600 190.100h4.800M809.400 190v10M811.800 190v10" stroke="#222" stroke-width="1.100" fill="none"/>
<path d="M809.800 189.600h-1.800a3 3 0 0 0 0 6h1.800z" fill="#222"/>
<!-- tools cross -->
<path d="M803.800 219.600l10.400 9M813.800 219.400l-6 5.600" stroke="#222" stroke-width="1.600" stroke-linecap="round"/>
<path d="M807.600 225.400l-3.600 3.400" stroke="#222" stroke-width="3.200" stroke-linecap="round"/>
<circle cx="803.600" cy="219.600" r="1.800" fill="#222"/><circle cx="814.200" cy="219.400" r="1.800" fill="#222"/><circle cx="814.200" cy="228.800" r="1.800" fill="#222"/>
<path d="M802 218l1.800 1.800M815.800 217.800l-1.800 1.800M815.800 230.400l-1.800-1.800" stroke="#f0f0f0" stroke-width="1.100"/>
<!-- CC -->
<ellipse cx="808.800" cy="252.800" rx="7.500" ry="5.700" fill="#2a2a2a"/>
<path d="M804.600 255a3 3 0 0 1 1-5.200 3.800 3.800 0 0 1 6.600-.6 3.100 3.100 0 0 1 .8 6" fill="none" stroke="#e8e8e8" stroke-width="0.900"/>
<path d="M806.400 255.600c2 .3 3.600-1.400 5-3.400" fill="none" stroke="#e8e8e8" stroke-width="0.900"/>
<path d="M805.800 252.400c1-1.400 3-1.400 4 0" fill="none" stroke="#e8e8e8" stroke-width="0.800"/>
</svg>

<div class="a" style="left:823.40px;top:46.20px;width:172.80px;height:275.30px;background:#f0f0f0;"></div>
<div class="a" style="left:823.40px;top:46.20px;width:172.80px;height:8.60px;background:#d2d2d2;"></div>
<svg style="left:986.8px;top:48.5px" width="6" height="4" viewBox="0 0 6 4"><path d="M0.4 0L2.6 2 0.4 4zM3.4 0L5.6 2 3.4 4z" fill="#444"/></svg>
<div class="a" style="left:823.40px;top:54.80px;width:172.80px;height:19.20px;background:#d8d8d8;"></div>
<div class="a" style="left:823.40px;top:54.80px;width:28.00px;height:19.40px;background:#f0f0f0;"></div>
<div class="t" style="left:829.50px;top:59.60px;font-size:7.8px;color:#333;">属性</div>
<svg style="left:985.5px;top:61.5px" width="6.5" height="6" viewBox="0 0 6.5 6"><path d="M0 0.5h6.5M0 2.2h6.5M0 3.9h6.5M0 5.6h6.5" stroke="#9a9a9a" stroke-width="0.8"/></svg>
<div class="a" style="left:823.40px;top:74.00px;width:172.80px;height:23.20px;background:#f3f3f3;"></div>
<div class="a" style="left:823.40px;top:97.20px;width:172.80px;height:0.70px;background:#e2e2e2;"></div>
<div class="a" style="left:985.00px;top:97.90px;width:11.20px;height:205.00px;background:#e7e7e7;"></div>
<div class="a" style="left:829.80px;top:77.60px;width:17.00px;height:16.80px;background:#b5b5b5;border-radius:2px"></div>
<svg style="left:832.9px;top:80.8px" width="11" height="9.6" viewBox="0 0 11 9.6"><rect x="0.5" y="0.5" width="10" height="8.6" fill="#f2f2f2" stroke="#222" stroke-width="1"/><path d="M1 8.6V7l2.800-3.600 2 2.400 1.600-1.400 2.600 2.800v1.400z" fill="#222"/><circle cx="7.800" cy="2.800" r="0.900" fill="#222"/></svg>
<div class="t" style="left:851.00px;top:83.10px;font-size:8.0px;color:#222;">像素图层属性</div>
<div class="lab" style="left:830.8px;top:106.6px">W:</div>
<div class="inp" style="left:844px;top:104.8px;width:43.4px;height:13.2px">1440 像素</div>
<div class="a" style="left:892.20px;top:101.90px;width:18.20px;height:18.80px;background:#b2b2b2;border-radius:2px"></div>
<svg style="left:896.1px;top:108px" width="10.6" height="5" viewBox="0 0 10.6 5"><rect x="0.7" y="0.7" width="4.4" height="3.6" rx="1.8" fill="none" stroke="#333" stroke-width="1.3"/><rect x="5.5" y="0.7" width="4.4" height="3.6" rx="1.8" fill="none" stroke="#333" stroke-width="1.3"/></svg>
<div class="lab" style="left:918.3px;top:106.6px">H:</div>
<div class="inp" style="left:927.7px;top:104.8px;width:44.6px;height:13.2px">429 像素</div>
<div class="lab" style="left:834.2px;top:125.6px">X:</div>
<div class="inp" style="left:844px;top:124.2px;width:43.4px;height:12.2px">0 像素</div>
<div class="lab" style="left:920.2px;top:125.6px">Y:</div>
<div class="inp" style="left:927.7px;top:124.2px;width:44.6px;height:12.2px">369 像素</div>
<div class="a" style="left:823.40px;top:321.80px;width:172.80px;height:156.20px;background:#f0f0f0;"></div>
<div class="a" style="left:823.40px;top:321.80px;width:172.80px;height:20.40px;background:#d6d6d6;"></div>
<div class="a" style="left:845.80px;top:323.60px;width:29.00px;height:18.80px;background:#f0f0f0;"></div>
<div class="a" style="left:874.80px;top:324.40px;width:0.70px;height:17.80px;background:#c8c8c8;"></div>
<div class="a" style="left:902.80px;top:324.40px;width:0.70px;height:17.80px;background:#c8c8c8;"></div>
<div class="a" style="left:845.20px;top:324.40px;width:0.70px;height:17.80px;background:#c8c8c8;"></div>
<div class="t" style="left:828.80px;top:328.20px;font-size:7.6px;color:#777;">3D</div>
<div class="t" style="left:852.60px;top:328.20px;font-size:7.8px;color:#333;">图层</div>
<div class="t" style="left:881.00px;top:328.20px;font-size:7.8px;color:#777;">通道</div>
<svg style="left:985.5px;top:329px" width="6.5" height="6" viewBox="0 0 6.5 6"><path d="M0 0.5h6.5M0 2.2h6.5M0 3.9h6.5M0 5.6h6.5" stroke="#9a9a9a" stroke-width="0.8"/></svg>
<div class="a" style="left:825.9px;top:348px;width:59.4px;height:13.4px;background:#fcfcfc;border-radius:2.5px"></div>
<svg style="left:830.5px;top:350.6px" width="7" height="8" viewBox="0 0 7 8"><circle cx="4.1" cy="2.9" r="2.1" fill="none" stroke="#333" stroke-width="1"/><path d="M2.6 4.6L0.5 7.4" stroke="#333" stroke-width="1.2"/></svg>
<div class="t" style="left:841.40px;top:350.00px;font-size:8.0px;color:#222;">类型</div>
<svg style="left:877px;top:353.4px" width="5.4" height="3.6" viewBox="0 0 6 4"><path d="M0.5 0.5l2.5 2.5 2.5-2.5" stroke="#9a9a9a" stroke-width="0.9" fill="none"/></svg>
<svg style="left:823px;top:344px" width="173" height="60" viewBox="823 344 173 60">
<!-- filter: pixel -->
<rect x="896.900" y="352.200" width="7.600" height="5.600" fill="#f4f4f4" stroke="#333" stroke-width="0.900"/>
<path d="M898 357l1.600-2.400 1.200 1.400 1-.8 1.600 1.800z" fill="#333"/>
<!-- adjustment -->
<circle cx="917.600" cy="355" r="3.300" fill="#f4f4f4" stroke="#333" stroke-width="0.900"/>
<path d="M919.900 352.700a3.300 3.300 0 0 1-4.600 4.600z" fill="#333"/>
<!-- T -->
<text x="934.600" y="358.400" text-anchor="middle" font-family="Liberation Serif,serif" font-weight="bold" font-size="10" fill="#2a2a2a">T</text>
<!-- shape / transform box -->
<rect x="948.200" y="352.400" width="6" height="5.200" fill="none" stroke="#333" stroke-width="0.900"/>
<path d="M947.200 351.400h2v2h-2zM953.200 351.400h2v2h-2zM947.200 356.600h2v2h-2zM953.200 356.600h2v2h-2z" fill="#333"/>
<!-- smart object lock -->
<path d="M966.200 355v-1.600a1.900 1.900 0 0 1 3.800 0v1.600" fill="none" stroke="#333" stroke-width="0.900"/>
<rect x="964.600" y="354.800" width="6.600" height="4.600" fill="#f4f4f4" stroke="#333" stroke-width="0.900"/>
<rect x="967.300" y="356.400" width="1.400" height="1.600" fill="#333"/>
<!-- toggle -->
<rect x="983.600" y="349.600" width="6.800" height="12" rx="3.400" fill="#fafafa"/>
<circle cx="986.800" cy="352.100" r="2.650" fill="#2a2a2a"/>
<!-- lock transparent -->
<rect x="853.800" y="389" width="7" height="7" fill="#f4f4f4" stroke="#444" stroke-width="0.800"/>
<path d="M853.800 389h2.300v2.300h-2.300zM858.500 389h2.300v2.300h-2.300zM856.100 391.300h2.400v2.400h-2.400zM853.800 393.700h2.300v2.300h-2.300zM858.500 393.700h2.300v2.300h-2.300z" fill="#555"/>
<!-- lock brush -->
<path d="M877 388.200l-4.200 5" stroke="#222" stroke-width="1.300" stroke-linecap="round"/>
<path d="M873 392.800c-1 .1-2.200 1-2.600 2.200-.3 .8-.7 1.300-1.400 1.600 1.600 .4 3.100 0 4.100-1 .9-.9 1-2 .7-2.700z" fill="#222"/>
<!-- lock move -->
<path d="M887.600 388.500l1.600 1.900h-1.100v1.800h1.900v-1.100l1.900 1.600-1.900 1.600v-1.100h-1.900v1.800h1.100l-1.600 1.900-1.600-1.900h1.100v-1.800h-1.900v1.100l-1.900-1.600 1.900-1.600v1.100h1.900v-1.800h-1.100z" fill="#2b2b2b"/>
<!-- artboard -->
<path d="M898.800 390.600h5.400l2.400 2.400v4M900.800 388.600v7h6.600" fill="none" stroke="#333" stroke-width="0.900"/>
<!-- lock all -->
<path d="M916.900 392v-1.700a1.900 1.900 0 0 1 3.800 0v1.700" fill="none" stroke="#222" stroke-width="1"/>
<rect x="915.200" y="391.600" width="7.200" height="5.200" fill="#222"/>
<rect x="918.200" y="393.400" width="1.200" height="1.600" fill="#e8e8e8"/>
</svg>

<div class="a" style="left:825.9px;top:367.4px;width:81px;height:12.8px;background:#fcfcfc;border-radius:2.5px"></div>
<div class="t" style="left:832.00px;top:368.80px;font-size:8.0px;color:#222;">正常</div>
<svg style="left:899.4px;top:372.4px" width="5.4" height="3.6" viewBox="0 0 6 4"><path d="M0.5 0.5l2.5 2.5 2.5-2.5" stroke="#9a9a9a" stroke-width="0.9" fill="none"/></svg>
<div class="t" style="left:912.40px;top:368.80px;font-size:8.1px;color:#555;letter-spacing:0.2px">不透明度:</div>
<div class="a" style="left:951.4px;top:367.4px;width:26.8px;height:12.8px;background:#fcfcfc;border-radius:2px"></div>
<div class="t" style="left:953.60px;top:369.00px;font-size:7.4px;color:#222;">100%</div>
<div class="a" style="left:980px;top:367.4px;width:10.2px;height:12.8px;background:#fcfcfc;border-radius:2px"></div>
<svg style="left:982.6px;top:372.4px" width="5" height="3.4" viewBox="0 0 6 4"><path d="M0.5 0.5l2.5 2.5 2.5-2.5" stroke="#9a9a9a" stroke-width="0.9" fill="none"/></svg>
<div class="t" style="left:827.80px;top:388.40px;font-size:8.1px;color:#555;letter-spacing:0.7px">锁定:</div>
<div class="t" style="left:929.80px;top:388.40px;font-size:8.1px;color:#555;letter-spacing:0.3px">填充:</div>
<div class="a" style="left:951.4px;top:387.2px;width:26.8px;height:12px;background:#fcfcfc;border-radius:2px"></div>
<div class="t" style="left:953.60px;top:388.40px;font-size:7.4px;color:#222;">100%</div>
<div class="a" style="left:980px;top:387.2px;width:10.2px;height:12px;background:#fcfcfc;border-radius:2px"></div>
<svg style="left:982.6px;top:391.8px" width="5" height="3.4" viewBox="0 0 6 4"><path d="M0.5 0.5l2.5 2.5 2.5-2.5" stroke="#9a9a9a" stroke-width="0.9" fill="none"/></svg>
<div class="a" style="left:823.40px;top:403.30px;width:162.20px;height:75.00px;background:#e8e8e8;"></div>
<div class="a" style="left:985.60px;top:403.30px;width:10.00px;height:75.00px;background:#ececec;"></div>
<div class="a" style="left:823.40px;top:403.30px;width:162.20px;height:18.20px;background:#e4e4e4;"></div>
<div class="a" style="left:845.00px;top:403.30px;width:140.60px;height:18.20px;background:#b5b5b5;"></div>
<div class="a" style="left:823.40px;top:421.50px;width:162.20px;height:19.80px;background:#f0f0f0;"></div>
<div class="a" style="left:823.40px;top:441.30px;width:162.20px;height:20.20px;background:#f0f0f0;"></div>
<div class="a" style="left:823.40px;top:421.30px;width:162.20px;height:0.60px;background:#e0e0e0;"></div>
<div class="a" style="left:823.40px;top:441.00px;width:162.20px;height:0.60px;background:#e2e2e2;"></div>
<div class="a" style="left:823.40px;top:461.40px;width:162.20px;height:0.60px;background:#e0e0e0;"></div>
<div class="t" style="left:875.20px;top:408.40px;font-size:8.2px;color:#222;">图层 2</div>
<div class="t" style="left:875.20px;top:427.40px;font-size:8.2px;color:#222;">图层 1</div>
<div class="t" style="left:875.20px;top:447.00px;font-size:8.2px;color:#222;">背景</div>
<svg style="left:823px;top:403px" width="173" height="60" viewBox="823 403 173 60">
<defs>
<pattern id="chk" width="3.600" height="3.600" patternUnits="userSpaceOnUse"><rect width="3.600" height="3.600" fill="#fff"/><rect width="1.800" height="1.800" fill="#d0d0d0"/><rect x="1.800" y="1.800" width="1.800" height="1.800" fill="#d0d0d0"/></pattern>
<clipPath id="t1"><rect x="847" y="405" width="21.800" height="12.300"/></clipPath>
</defs>
<!-- eyes -->
<g id="eye1"><path d="M829.400 412.700c2.200-3.400 6.400-3.400 8.600 0-2.200 3.400-6.400 3.400-8.600 0z" fill="#2a2a2a"/><circle cx="833.700" cy="412.500" r="1.900" fill="#ececec"/><circle cx="833.700" cy="412.500" r="1.100" fill="#2a2a2a"/></g>
<g transform="translate(0 38.900)"><path d="M829.400 412.700c2.200-3.400 6.400-3.400 8.600 0-2.200 3.400-6.400 3.400-8.600 0z" fill="#2a2a2a"/><circle cx="833.700" cy="412.500" r="1.900" fill="#ececec"/><circle cx="833.700" cy="412.500" r="1.100" fill="#2a2a2a"/></g>
<rect x="829" y="428.300" width="7.500" height="7" fill="#f9f9f9" stroke="#e0e0e0" stroke-width="0.500"/>
<!-- thumb 1 -->
<rect x="846.200" y="404.200" width="23.400" height="15.800" fill="url(#chk)" stroke="#2a2a2a" stroke-width="1.400"/>
<ellipse cx="858.800" cy="416.400" rx="12.400" ry="5.200" fill="#000" clip-path="url(#t1)"/>
<rect x="847" y="417.300" width="21.800" height="1.900" fill="#fff"/>
<path d="M845.500 405.500v-2h2M868.300 403.500h2v2M870.300 418.700v2h-2M847.500 420.700h-2v-2" fill="none" stroke="#fafafa" stroke-width="0.800"/>
<!-- thumb 2 -->
<rect x="846.900" y="425" width="22" height="14.200" fill="url(#chk)" stroke="#3a3a3a" stroke-width="1"/>
<rect x="847.400" y="435.600" width="21" height="3.100" fill="#f4f4f4"/>
<rect x="850.300" y="426.900" width="13.200" height="7.700" fill="#c4500f"/>
<!-- thumb 3 -->
<rect x="846.900" y="444.400" width="22" height="14.200" fill="#fff" stroke="#4a4a4a" stroke-width="0.900"/>
<!-- lock -->
<path d="M969.200 450.600v-1.600a1.700 1.700 0 0 1 3.400 0v1.600" fill="none" stroke="#333" stroke-width="0.900"/>
<rect x="967.900" y="450.500" width="6" height="4.600" fill="#f2f2f2" stroke="#333" stroke-width="0.900"/>
<rect x="970.300" y="452" width="1.200" height="1.500" fill="#333"/>
</svg>

<div class="a" style="left:995.60px;top:0.00px;width:4.40px;height:478.00px;background:#f6f6f6;"></div>
<div class="a" style="left:997.20px;top:0.00px;width:0.70px;height:478.00px;background:#e0e0e0;"></div>
</body></html>
